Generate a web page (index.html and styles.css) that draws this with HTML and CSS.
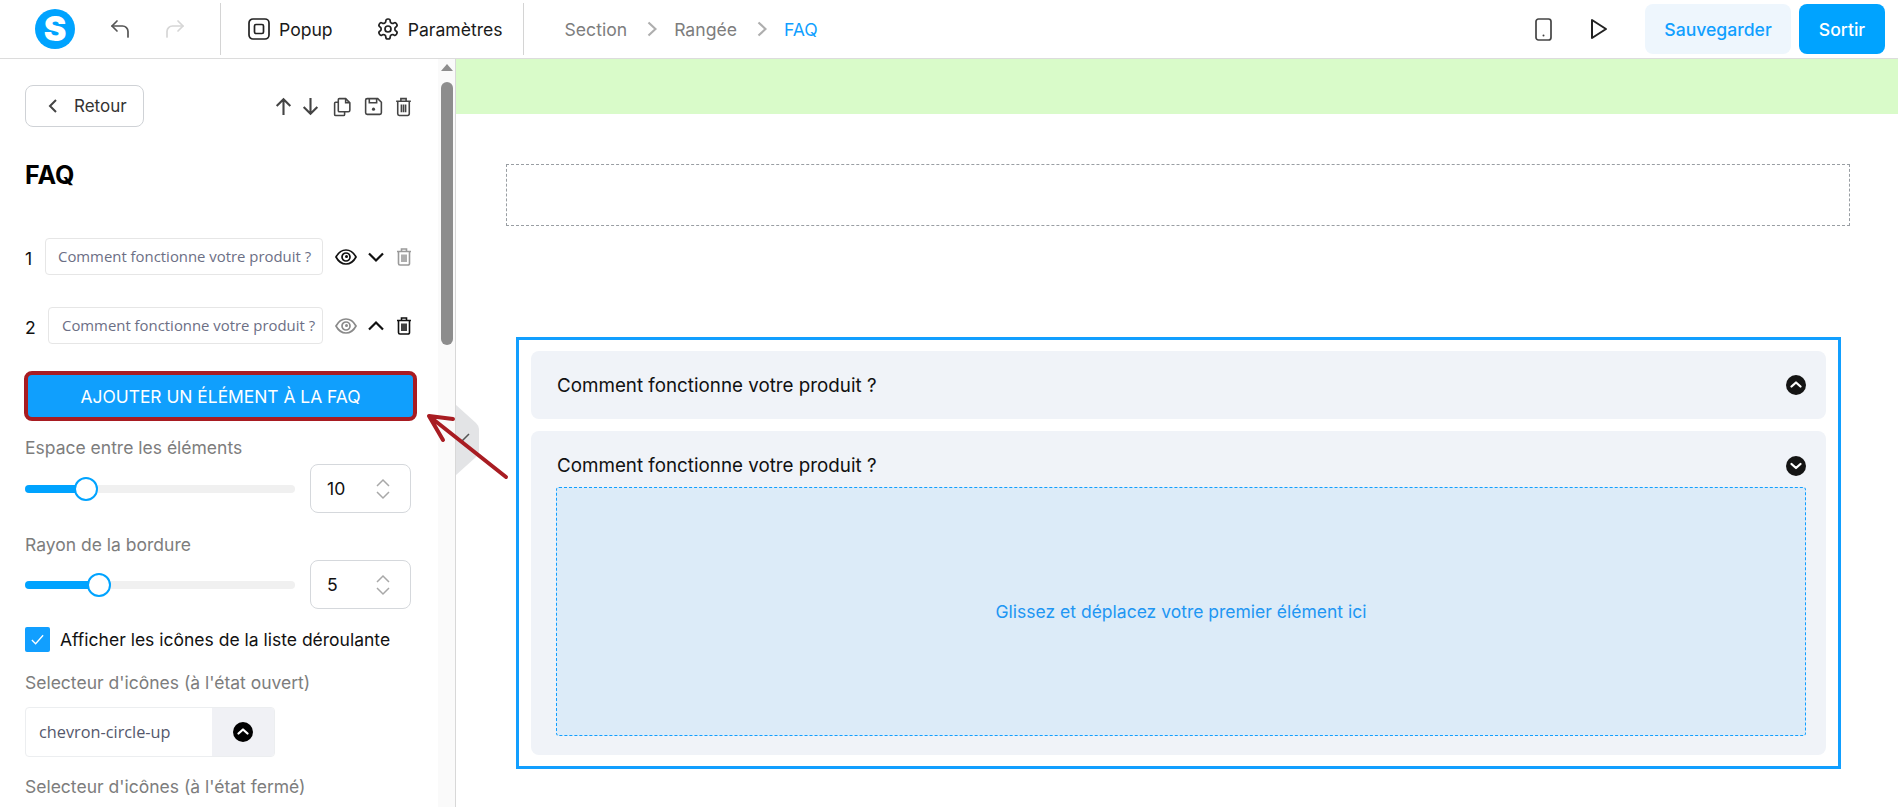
FILE: index.html
```html
<!DOCTYPE html>
<html lang="fr">
<head>
<meta charset="utf-8">
<title>FAQ</title>
<link rel="stylesheet" href="styles.css">
</head>
<body>
<header class="topbar">
  <div class="logo">S</div>
  <svg class="ico undo" viewBox="0 0 24 24"><path d="M9 14 4 9l5-5"/><path d="M4 9h10.5a5.5 5.5 0 0 1 5.5 5.5V20"/></svg>
  <svg class="ico redo" viewBox="0 0 24 24"><path d="m15 14 5-5-5-5"/><path d="M20 9H9.500A5.500 5.500 0 0 0 4 14.500V20"/></svg>
  <div class="divider first"></div>
  <button class="tool popup"><svg class="ico" viewBox="0 0 24 24"><rect x="2" y="2" width="20" height="20" rx="4"/><rect x="7.500" y="7.500" width="9" height="9" rx="1.500"/></svg><span>Popup</span></button>
  <button class="tool settings"><svg class="ico" viewBox="0 0 24 24"><path d="M12.220 2h-.44a2 2 0 0 0-2 2v.18a2 2 0 0 1-1 1.730l-.43.250a2 2 0 0 1-2 0l-.15-.08a2 2 0 0 0-2.730.730l-.220.380a2 2 0 0 0 .730 2.730l.150.100a2 2 0 0 1 1 1.720v.510a2 2 0 0 1-1 1.740l-.150.090a2 2 0 0 0-.730 2.730l.220.380a2 2 0 0 0 2.730.730l.150-.08a2 2 0 0 1 2 0l.430.250a2 2 0 0 1 1 1.730V20a2 2 0 0 0 2 2h.440a2 2 0 0 0 2-2v-.18a2 2 0 0 1 1-1.730l.430-.250a2 2 0 0 1 2 0l.150.080a2 2 0 0 0 2.730-.730l.220-.390a2 2 0 0 0-.730-2.730l-.150-.080a2 2 0 0 1-1-1.740v-.500a2 2 0 0 1 1-1.740l.150-.090a2 2 0 0 0 .730-2.730l-.220-.380a2 2 0 0 0-2.730-.730l-.150.080a2 2 0 0 1-2 0l-.430-.250a2 2 0 0 1-1-1.730V4a2 2 0 0 0-2-2z"/><circle cx="12" cy="12" r="3"/></svg><span>Paramètres</span></button>
  <div class="divider second"></div>
  <nav class="crumbs">
    <span>Section</span>
    <svg class="crumb-sep" viewBox="0 0 10 16"><path d="m1.500 1.500 7 6.500-7 6.500"/></svg>
    <span>Rangée</span>
    <svg class="crumb-sep" viewBox="0 0 10 16"><path d="m1.500 1.500 7 6.500-7 6.500"/></svg>
    <span class="current">FAQ</span>
  </nav>
  <svg class="phone" viewBox="0 0 17 23"><rect x="1" y="1" width="15" height="21" rx="2.500"/><circle class="dot" cx="8.500" cy="17.500" r="1"/></svg>
  <svg class="play" viewBox="0 0 18 22"><path d="M2 2v18l14-9z"/></svg>
  <button class="btn-save">Sauvegarder</button>
  <button class="btn-exit">Sortir</button>
</header>

<main class="main">
  <aside class="sidebar">
    <div class="panel">
      <div class="head-row">
        <button class="back"><svg viewBox="0 0 10 16"><path d="M8 2 2 8l6 6"/></svg><span>Retour</span></button>
        <div class="actions">
          <svg class="act up" viewBox="0 0 20 20"><path d="M10 18V3M3.500 9.500 10 3l6.500 6.500"/></svg>
          <svg class="act down" viewBox="0 0 20 20"><path d="M10 2v15M3.500 10.500 10 17l6.500-6.500"/></svg>
          <svg class="act thin" viewBox="0 0 20 20"><path d="M7 2.500h6l4 4v7a1.500 1.500 0 0 1-1.500 1.500H7A1 1 0 0 1 6 14V3.500a1 1 0 0 1 1-1z"/><path d="M13 2.500v4h4"/><path d="M6 6H3.500A1 1 0 0 0 2.500 7v10.500a1 1 0 0 0 1 1H11a1 1 0 0 0 1-1V15"/></svg>
          <svg class="act thin" viewBox="0 0 20 20"><path d="M4 2.500h10l3.500 3.500v10a1.500 1.500 0 0 1-1.500 1.500H4A1.500 1.500 0 0 1 2.500 16V4A1.500 1.500 0 0 1 4 2.500z"/><path d="M6 2.500v4h7v-4"/><circle class="fill" cx="10" cy="12.500" r="1.500"/></svg>
          <svg class="act thin" viewBox="0 0 20 20"><path d="M3 5h14M7.500 5V2.500h5V5M4.500 5v12a1.500 1.500 0 0 0 1.500 1.500h8a1.500 1.500 0 0 0 1.500-1.500V5M8 8v7.500M10 8v7.500M12 8v7.500"/></svg>
        </div>
      </div>
      <h1 class="title">FAQ</h1>

      <div class="faq-row">
        <span class="num">1</span>
        <div class="faq-input">Comment fonctionne votre produit ?</div>
        <svg class="eye" viewBox="0 0 22 18"><path d="M1 9c2.500-4.700 6-7 10-7s7.500 2.300 10 7c-2.500 4.700-6 7-10 7S3.500 13.700 1 9z"/><circle cx="11" cy="9" r="4"/><circle class="pupil" cx="11.500" cy="8.500" r="1.500"/></svg>
        <svg class="chev" viewBox="0 0 18 12"><path d="m2 2.500 7 7 7-7"/></svg>
        <svg class="bin muted" viewBox="0 0 20 20"><path d="M3 5h14M7.500 5V2.500h5V5M4.500 5v12a1.500 1.500 0 0 0 1.500 1.500h8a1.500 1.500 0 0 0 1.500-1.500V5M8 8v7.500M10 8v7.500M12 8v7.500"/></svg>
      </div>
      <div class="faq-row second-row">
        <span class="num">2</span>
        <div class="faq-input">Comment fonctionne votre produit ?</div>
        <svg class="eye muted" viewBox="0 0 22 18"><path d="M1 9c2.500-4.700 6-7 10-7s7.500 2.300 10 7c-2.500 4.700-6 7-10 7S3.500 13.700 1 9z"/><circle cx="11" cy="9" r="4"/><circle class="pupil" cx="11.500" cy="8.500" r="1.500"/></svg>
        <svg class="chev" viewBox="0 0 18 12"><path d="m2 9.500 7-7 7 7"/></svg>
        <svg class="bin" viewBox="0 0 20 20"><path d="M3 5h14M7.500 5V2.500h5V5M4.500 5v12a1.500 1.500 0 0 0 1.500 1.500h8a1.500 1.500 0 0 0 1.500-1.500V5M8 8v7.500M10 8v7.500M12 8v7.500"/></svg>
      </div>

      <div class="add-wrap"><button class="add">AJOUTER UN ÉLÉMENT À LA FAQ</button></div>

      <div class="label gap-a">Espace entre les éléments</div>
      <div class="slider-row first-slider">
        <div class="track"><div class="fill-bar" style="width:61px"></div><div class="thumb"></div></div>
        <div class="numbox"><span>10</span><svg viewBox="0 0 16 24"><path d="m2 9 6-6 6 6M2 15l6 6 6-6"/></svg></div>
      </div>

      <div class="label gap-b">Rayon de la bordure</div>
      <div class="slider-row second-slider">
        <div class="track"><div class="fill-bar" style="width:74px"></div><div class="thumb"></div></div>
        <div class="numbox"><span>5</span><svg viewBox="0 0 16 24"><path d="m2 9 6-6 6 6M2 15l6 6 6-6"/></svg></div>
      </div>

      <label class="check-row">
        <span class="check"><svg viewBox="0 0 16 16"><path d="m2 8.500 4 4 8-9"/></svg></span>
        <span>Afficher les icônes de la liste déroulante</span>
      </label>

      <div class="label gap-d">Selecteur d'icônes (à l'état ouvert)</div>
      <div class="picker">
        <div class="picker-text">chevron-circle-up</div>
        <div class="picker-icon"><svg class="cc black" viewBox="0 0 20 20"><circle cx="10" cy="10" r="10"/><path d="m5.500 11.500 4.500-4 4.500 4"/></svg></div>
      </div>
      <div class="label gap-c">Selecteur d'icônes (à l'état fermé)</div>
    </div>
    <div class="scrollbar">
      <div class="sb-up"></div>
      <div class="sb-thumb"></div>
    </div>
  </aside>

  <section class="canvas">
    <div class="green"></div>
    <div class="dashed"></div>
    <div class="faq-box">
      <div class="item closed">
        <div class="item-head"><span>Comment fonctionne votre produit ?</span><svg class="cc" viewBox="0 0 20 20"><circle cx="10" cy="10" r="10"/><path d="m5.500 11.500 4.500-4 4.500 4"/></svg></div>
      </div>
      <div class="item open">
        <div class="item-head"><span>Comment fonctionne votre produit ?</span><svg class="cc" viewBox="0 0 20 20"><circle cx="10" cy="10" r="10"/><path d="m5.500 8 4.500 4 4.500-4"/></svg></div>
        <div class="drop">Glissez et déplacez votre premier élément ici</div>
      </div>
    </div>
  </section>
</main>

<svg class="collapse" viewBox="0 0 23 70"><path class="tab" d="M0 0 20 18q3 3 3 6v22q0 3-3 6L0 70z"/><path class="tab-chev" d="M13 29 6 36l7 7"/></svg>
<svg class="annot" viewBox="0 0 100 80"><path d="M83 66 6 5M6 5l24 3M6 5l14 24"/></svg>
</body>
</html>
```

FILE: styles.css
```css
* { box-sizing: border-box; }
html, body { margin: 0; padding: 0; height: 807px; overflow: hidden; background: #fff; }
body { font-family: Inter, "Liberation Sans", sans-serif; color: #111; font-size: 17.6px; }
button { font-family: inherit; border: 0; background: none; padding: 0; cursor: pointer; }
svg { display: block; flex: none; }
.ico { width: 24px; height: 24px; fill: none; stroke: #222; stroke-width: 1.700; stroke-linecap: round; stroke-linejoin: round; }

.topbar { height: 59px; border-bottom: 1px solid #dcdcdc; display: flex; align-items: center; padding-left: 35px; }
.logo { width: 40px; height: 40px; border-radius: 50%; background: #00a3ff; color: #fff; font-weight: 900; font-size: 34px; line-height: 40px; text-align: center; }
.undo { margin-left: 33px; stroke: #555; }
.redo { margin-left: 31px; stroke: #d6d6d6; }
.divider { width: 1px; height: 52px; background: #d4d4d4; }
.divider.first { margin-left: 33px; }
.divider.second { margin-left: 20px; }
.tool { display: flex; align-items: center; font-size: 17.6px; font-weight: 400; color: #1a1a1a; gap: 8px; }
.popup { margin-left: 26px; }
.settings { margin-left: 43px; }
.crumbs { display: flex; align-items: center; margin-left: 41px; color: #7d7d7d; font-size: 17.6px; font-weight: 400; }
.crumbs .current { color: #119fff; }
.crumb-sep { width: 10px; height: 16px; margin: 0 17px 0 20px; fill: none; stroke: #aeaeae; stroke-width: 2.200; }
.phone { width: 17px; height: 23px; margin-left: auto; fill: none; stroke: #444; stroke-width: 1.700; }
.phone .dot { fill: #444; stroke: none; }
.play { width: 18px; height: 22px; margin-left: 38px; fill: none; stroke: #222; stroke-width: 2; stroke-linejoin: round; }
.btn-save { margin-left: 37px; width: 146px; height: 50px; border-radius: 8px; background: #eef6fd; color: #119fff; font-size: 17.6px; font-weight: 500; }
.btn-exit { margin: 0 13px 0 8px; width: 86px; height: 50px; border-radius: 8px; background: #00a3ff; color: #fff; font-size: 17.6px; font-weight: 500; }

.main { display: flex; height: 748px; overflow: hidden; }
.sidebar { width: 456px; flex: none; border-right: 1px solid #d8d8d8; display: flex; overflow: hidden; }
.panel { width: 438px; flex: none; padding: 26px 0 0 25px; }
.scrollbar { width: 17px; background: #fafafa; position: relative; padding-top: 5px; }
.sb-up { width: 0; height: 0; margin: 0 auto; border-left: 6px solid transparent; border-right: 6px solid transparent; border-bottom: 7px solid #8d8d8d; }
.sb-thumb { width: 12px; height: 263px; margin: 11px auto 0; background: #8d8d8d; border-radius: 6px; }

.head-row { height: 42px; display: flex; align-items: center; width: 389px; }
.back { width: 119px; height: 42px; border: 1px solid #cfd2d6; border-radius: 8px; display: flex; align-items: center; padding-left: 22px; gap: 16px; font-size: 17px; color: #333; background: #fff; }
.back svg { width: 10px; height: 16px; fill: none; stroke: #444; stroke-width: 2; }
.actions { margin-left: auto; display: flex; gap: 9.500px; }
.act { width: 21px; height: 21px; fill: none; stroke: #444; stroke-width: 2; }
.act.up { margin-right: -4px; }
.act.down { margin-right: 2px; }
.act.thin { stroke-width: 1.500; }
.act .fill { fill: #444; stroke: none; }
.title { margin: 33px 0 -1px; font-size: 25px; line-height: 30px; font-weight: 700; color: #000; }

.faq-row { display: flex; align-items: center; height: 37px; width: 389px; margin-top: 49px; }
.second-row { margin-top: 32px; }
.num { font-size: 17.6px; width: 20px; color: #111; position: relative; top: 2px; }
.second-row .num { width: 23px; }
.faq-input { flex: 1; height: 37px; border: 1px solid #e6e6e6; border-radius: 4px; background: #fff; font-family: "Open Sans", Inter, sans-serif; font-size: 14.9px; line-height: 35px; color: #6c6f85; padding-left: 12px; white-space: nowrap; overflow: hidden; }
.second-row .faq-input { padding-left: 13px; }
.eye { width: 22px; height: 18px; margin-left: 12px; fill: none; stroke: #111; stroke-width: 1.700; }
.eye .pupil { fill: #111; stroke: none; }
.eye.muted { stroke: #8a8a8a; }
.eye.muted .pupil { fill: #8a8a8a; }
.chev { width: 18px; height: 12px; margin-left: 10px; fill: none; stroke: #111; stroke-width: 2.200; }
.bin { width: 20px; height: 21px; margin-left: 9px; fill: none; stroke: #111; stroke-width: 1.600; }
.bin.muted { stroke: #9a9a9a; }

.add-wrap { margin-top: 27px; width: 393px; height: 50px; margin-left: -1px; border: 4px solid #a81c22; border-radius: 8px; background: #109ffd; }
.add { width: 100%; height: 100%; color: #fff; font-size: 17.4px; font-weight: 400; display: block; }

.label { font-size: 17.5px; line-height: 24px; color: #7d7d7d; }
.gap-a { margin-top: 15px; }
.gap-b { margin-top: 20px; }
.gap-c { margin-top: 18px; }
.gap-d { margin-top: 19px; }
.slider-row { display: flex; align-items: center; width: 386px; height: 49px; }
.first-slider { margin-top: 4px; }
.second-slider { margin-top: 3px; }
.track { position: relative; width: 270px; height: 8px; border-radius: 4px; background: #f0f0f0; }
.fill-bar { height: 8px; border-radius: 4px; background: #00a3ff; }
.thumb { position: absolute; top: -8px; left: 49px; width: 24px; height: 24px; border-radius: 50%; background: #fff; border: 2px solid #00a3ff; }
.second-slider .thumb { left: 62px; }
.numbox { margin-left: auto; width: 101px; height: 49px; border: 1px solid #d5d8dc; border-radius: 8px; display: flex; align-items: center; justify-content: space-between; padding: 0 19px 0 16px; font-size: 17.6px; color: #111; }
.numbox svg { width: 16px; height: 24px; fill: none; stroke: #a8a8a8; stroke-width: 1.500; }

.check-row { display: flex; align-items: center; margin-top: 18px; height: 25px; gap: 10px; font-size: 17.5px; color: #111; }
.check { width: 25px; height: 25px; background: #119fff; border-radius: 2px; display: flex; align-items: center; justify-content: center; }
.check svg { width: 15px; height: 15px; fill: none; stroke: #fff; stroke-width: 1.400; }

.picker { display: flex; width: 250px; height: 50px; margin-top: 12px; border: 1px solid #eceef0; border-radius: 4px; overflow: hidden; }
.picker-text { flex: 1; font-family: "Open Sans", Inter, sans-serif; font-size: 16.3px; line-height: 48px; padding-left: 13px; color: #55586c; }
.picker-icon { width: 62px; background: #f0f1f5; display: flex; align-items: center; justify-content: center; }

.cc { width: 20px; height: 20px; fill: #141414; stroke: none; }
.cc path { fill: none; stroke: #fff; stroke-width: 2.300; stroke-linecap: round; stroke-linejoin: round; }
.cc.black { fill: #000; }

.canvas { flex: 1; min-width: 0; }
.green { height: 55px; background: #d9fbc9; }
.dashed { height: 62px; margin: 50px 48px 0 50px; border: 1px dashed #999ea3; }
.faq-box { margin: 111px 57px 0 60px; height: 432px; border: 3px solid #119fff; padding: 11px 12px; }
.item { background: #f0f3f8; border-radius: 8px; padding: 0 20px 0 26px; }
.closed { height: 68px; }
.open { height: 324px; margin-top: 12px; }
.item-head { display: flex; align-items: center; justify-content: space-between; font-size: 18.8px; font-weight: 400; color: #111; height: 68px; }
.open .item-head { height: 35px; padding-top: 17px; box-sizing: content-box; }
.drop { margin-top: 4px; margin-left: -1px; height: 249px; border: 1px dashed #119fff; border-radius: 3px; background: #dcebf8; color: #2196f3; font-size: 17.5px; display: flex; align-items: center; justify-content: center; }

.collapse { position: absolute; left: 456px; top: 405px; width: 23px; height: 70px; }
.collapse .tab { fill: #e3e4e6; }
.collapse .tab-chev { fill: none; stroke: #555; stroke-width: 1.500; }
.annot { position: absolute; left: 423px; top: 411px; width: 100px; height: 80px; fill: none; stroke: #a81c22; stroke-width: 4; stroke-linecap: round; }
```
